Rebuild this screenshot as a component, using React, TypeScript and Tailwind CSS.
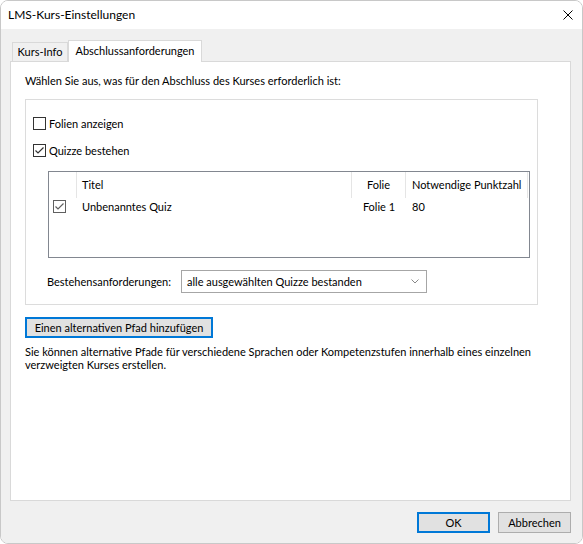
import React from "react";

function CheckBox({ checked, tone = "#333333" }: { checked?: boolean; tone?: string }) {
  return (
    <span
      className="w-[13px] h-[13px] border bg-white flex items-center justify-center shrink-0"
      style={{ borderColor: tone }}
    >
      {checked && (
        <svg width="11" height="11" viewBox="0 0 11 11">
          <path d="M1.5 5.5 L4 8 L9.5 2.5" fill="none" stroke={tone} strokeWidth="1.2" />
        </svg>
      )}
    </span>
  );
}

export default function App() {
  return (
    <div className="w-[583px] h-[544px] bg-white font-['Lato',sans-serif] text-[11px] leading-[14px] text-black">
      <div className="w-full h-full flex flex-col border border-[#c8c8c8] rounded-[8px] overflow-hidden">
        {/* title bar */}
        <div className="h-[28px] shrink-0 bg-white flex items-center justify-between pl-[7px] pr-[9px] text-[12px]">
          <span>LMS-Kurs-Einstellungen</span>
          <svg width="10" height="10" viewBox="0 0 10 10">
            <path d="M0.5 0.5 L9.5 9.5 M9.5 0.5 L0.5 9.5" stroke="#000" strokeWidth="1" />
          </svg>
        </div>

        <div className="flex-1 bg-[#f0f0f0] flex flex-col pl-[9px] pt-[11px]">
          {/* tabs */}
          <div className="flex items-end h-[21px]">
            <div className="ml-[2px] w-[56px] h-[19px] border border-b-0 border-[#d9d9d9] bg-[#f0f0f0] flex items-center justify-center">
              Kurs-Info
            </div>
            <div className="relative z-10 -mb-px w-[134px] h-[22px] border border-b-0 border-[#d9d9d9] bg-white flex items-center justify-center pb-[1px]">
              Abschlussanforderungen
            </div>
          </div>

          {/* panel */}
          <div className="w-[561px] h-[440px] border border-[#d9d9d9] bg-white pt-[12px] px-[14px] flex flex-col">
            <div>Wählen Sie aus, was für den Abschluss des Kurses erforderlich ist:</div>

            <div className="mt-[11px] w-[513px] h-[206px] border border-[#dcdcdc] flex flex-col pt-[17px] pl-[7px]">
              <label className="flex items-center gap-[3px] h-[13px]">
                <CheckBox />
                <span>Folien anzeigen</span>
              </label>
              <label className="flex items-center gap-[3px] h-[13px] mt-[14px]">
                <CheckBox checked />
                <span>Quizze bestehen</span>
              </label>

              {/* list view */}
              <div className="mt-[14px] ml-[15px] w-[482px] h-[87px] border border-[#828790] bg-white flex flex-col">
                <div className="flex h-[26px]">
                  <div className="w-[28px] border-r border-[#e5e5e5]" />
                  <div className="w-[275px] border-r border-[#e5e5e5] flex items-center pl-[5px]">Titel</div>
                  <div className="w-[54px] border-r border-[#e5e5e5] flex items-center justify-center">Folie</div>
                  <div className="w-[122px] border-r border-[#e5e5e5] flex items-center pl-[6px]">
                    Notwendige Punktzahl
                  </div>
                </div>
                <div className="flex h-[17px] items-center">
                  <div className="w-[28px] pl-[4px]">
                    <CheckBox checked tone="#606060" />
                  </div>
                  <div className="w-[275px] pl-[5px]">Unbenanntes Quiz</div>
                  <div className="w-[54px] text-center">Folie 1</div>
                  <div className="w-[122px] pl-[6px]">80</div>
                </div>
              </div>

              {/* pass requirement */}
              <div className="mt-[12px] ml-[14px] flex items-center">
                <span className="w-[134px]">Bestehensanforderungen:</span>
                <div className="w-[246px] h-[23px] border border-[#a6a6a6] bg-white flex items-center justify-between pl-[5px] pr-[7px]">
                  <span>alle ausgewählten Quizze bestanden</span>
                  <svg width="8" height="5" viewBox="0 0 8 5">
                    <path d="M0.5 0.5 L4 4 L7.5 0.5" fill="none" stroke="#888" strokeWidth="1" />
                  </svg>
                </div>
              </div>
            </div>

            <button className="mt-[12px] w-[188px] h-[21px] border-2 border-[#0078d7] bg-[#e1e1e1] flex items-center justify-center">
              Einen alternativen Pfad hinzufügen
            </button>

            <p className="mt-[7px] leading-[13px]">
              Sie können alternative Pfade für verschiedene Sprachen oder Kompetenzstufen innerhalb eines einzelnen
              <br />
              verzweigten Kurses erstellen.
            </p>
          </div>

          {/* footer buttons */}
          <div className="w-[561px] mt-[11px] flex justify-end gap-[8px]">
            <button className="w-[73px] h-[21px] border-2 border-[#0078d7] bg-[#e1e1e1] flex items-center justify-center">
              OK
            </button>
            <button className="w-[73px] h-[21px] border border-[#adadad] bg-[#e1e1e1] flex items-center justify-center">
              Abbrechen
            </button>
          </div>
        </div>
      </div>
    </div>
  );
}
